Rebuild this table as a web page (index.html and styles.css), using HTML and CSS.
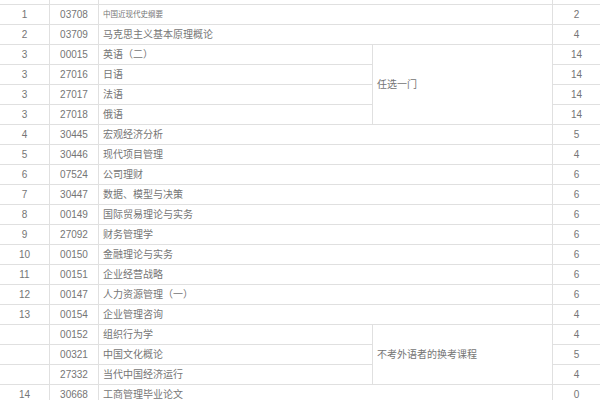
FILE: index.html
```html
<!DOCTYPE html>
<html lang="zh">
<head>
<meta charset="utf-8">
<link rel="stylesheet" href="styles.css">
</head>
<body>
<table class="plan">
  <colgroup>
    <col class="c-no"><col class="c-code"><col class="c-name"><col class="c-note"><col class="c-credit">
  </colgroup>
  <tr class="head"><td></td><td></td><td class="name" colspan="2"></td><td></td></tr>
  <tr><td>1</td><td>03708</td><td class="name small" colspan="2">中国近现代史纲要</td><td>2</td></tr>
  <tr><td>2</td><td>03709</td><td class="name" colspan="2">马克思主义基本原理概论</td><td>4</td></tr>
  <tr><td>3</td><td>00015</td><td class="name">英语（二）</td><td class="note" rowspan="4">任选一门</td><td>14</td></tr>
  <tr><td>3</td><td>27016</td><td class="name">日语</td><td>14</td></tr>
  <tr><td>3</td><td>27017</td><td class="name">法语</td><td>14</td></tr>
  <tr><td>3</td><td>27018</td><td class="name">俄语</td><td>14</td></tr>
  <tr><td>4</td><td>30445</td><td class="name" colspan="2">宏观经济分析</td><td>5</td></tr>
  <tr><td>5</td><td>30446</td><td class="name" colspan="2">现代项目管理</td><td>4</td></tr>
  <tr><td>6</td><td>07524</td><td class="name" colspan="2">公司理财</td><td>6</td></tr>
  <tr><td>7</td><td>30447</td><td class="name" colspan="2">数据、模型与决策</td><td>6</td></tr>
  <tr><td>8</td><td>00149</td><td class="name" colspan="2">国际贸易理论与实务</td><td>6</td></tr>
  <tr><td>9</td><td>27092</td><td class="name" colspan="2">财务管理学</td><td>6</td></tr>
  <tr><td>10</td><td>00150</td><td class="name" colspan="2">金融理论与实务</td><td>6</td></tr>
  <tr><td>11</td><td>00151</td><td class="name" colspan="2">企业经营战略</td><td>6</td></tr>
  <tr><td>12</td><td>00147</td><td class="name" colspan="2">人力资源管理（一）</td><td>6</td></tr>
  <tr><td>13</td><td>00154</td><td class="name" colspan="2">企业管理咨询</td><td>4</td></tr>
  <tr><td></td><td>00152</td><td class="name">组织行为学</td><td class="note" rowspan="3">不考外语者的换考课程</td><td>4</td></tr>
  <tr><td></td><td>00321</td><td class="name">中国文化概论</td><td>5</td></tr>
  <tr><td></td><td>27332</td><td class="name">当代中国经济运行</td><td>4</td></tr>
  <tr><td>14</td><td>30668</td><td class="name" colspan="2">工商管理毕业论文</td><td>0</td></tr>
</table>
</body>
</html>
```

FILE: styles.css
```css
html, body {
  margin: 0;
  padding: 0;
  background: #ffffff;
}
body {
  font-family: "Liberation Sans", "Noto Sans CJK SC", sans-serif;
  font-size: 10px;
  color: #757575;
}
.plan {
  width: 601px;
  margin-top: -16px;
  margin-left: -1px;
  border-collapse: collapse;
  table-layout: fixed;
}
.c-no { width: 50px; }
.c-code { width: 49px; }
.c-name { width: 274px; }
.c-note { width: 180px; }
.c-credit { width: 48px; }
.plan td {
  height: 19px;
  padding: 0;
  border: 1px solid #e0e0e0;
  text-align: center;
  vertical-align: middle;
  line-height: 12px;
  white-space: nowrap;
}
.plan td.name,
.plan td.note {
  text-align: left;
  padding-left: 4px;
}
.plan td.small {
  font-size: 7.5px;
}
```
